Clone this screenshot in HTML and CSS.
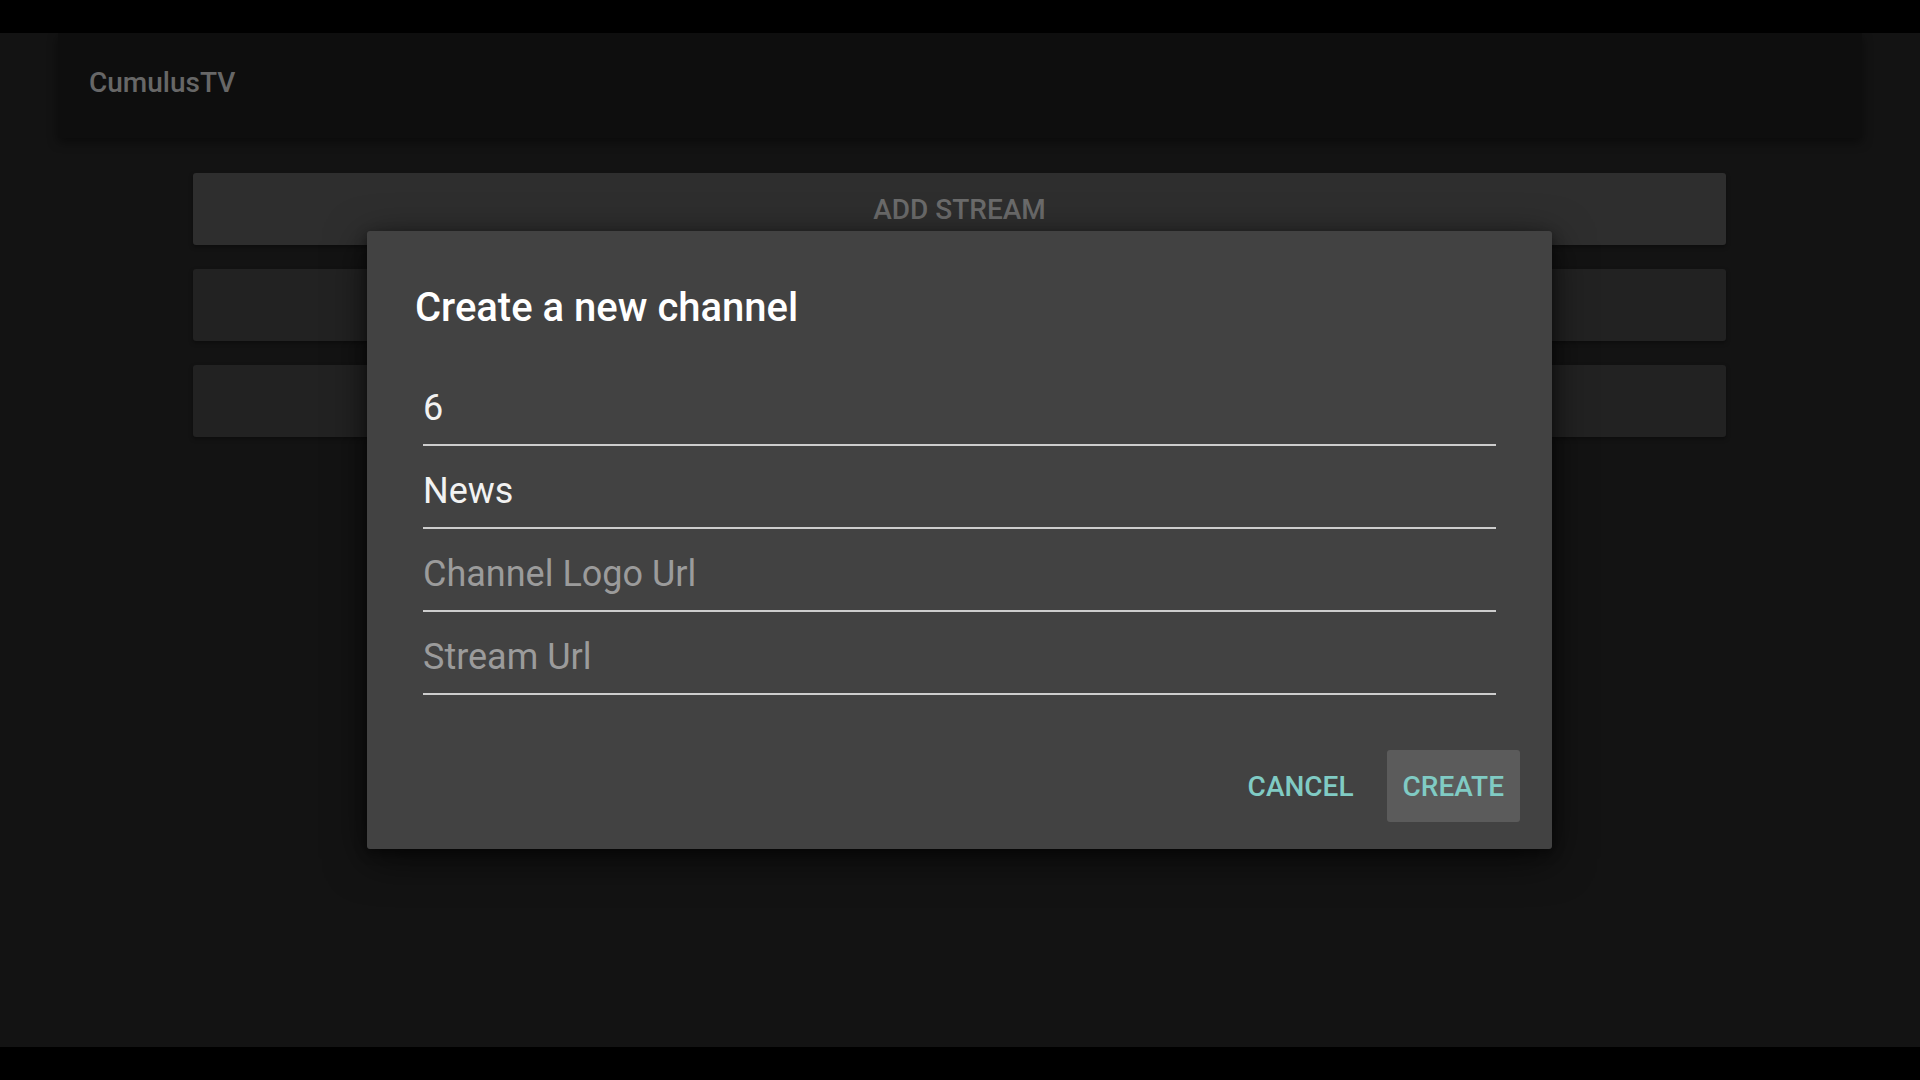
FILE: index.html
```html
<!DOCTYPE html>
<html>
<head>
<meta charset="utf-8">
<link rel="stylesheet" href="styles.css">
</head>
<body>
<div class="screen">
  <header class="toolbar">
    <span class="app-title">CumulusTV</span>
  </header>
  <div class="list">
    <div class="list-btn focused">ADD STREAM</div>
    <div class="list-btn"></div>
    <div class="list-btn"></div>
  </div>

  <div class="dialog">
    <h1 class="dialog-title">Create a new channel</h1>
    <div class="fields">
      <div class="field value">6</div>
      <div class="field value">News</div>
      <div class="field hint">Channel Logo Url</div>
      <div class="field hint">Stream Url</div>
    </div>
    <div class="actions">
      <div class="action">CANCEL</div>
      <div class="action selected">CREATE</div>
    </div>
  </div>
</div>
</body>
</html>
```
FILE: styles.css
```css
html, body {
  margin: 0;
  padding: 0;
  background: #000;
  font-family: Roboto, "Noto Sans", sans-serif;
}
.screen {
  position: relative;
  margin-top: 33px;
  height: 1014px;
  background: #131313;
  overflow: hidden;
}
.toolbar {
  margin: 0 58px 0 58px;
  height: 105px;
  box-sizing: border-box;
  padding: 29px 0 0 31px;
  background: #0e0e0e;
  box-shadow: 0 4px 10px rgba(0, 0, 0, 0.45);
}
.app-title {
  display: block;
  font-size: 28px;
  line-height: 42px;
  font-weight: 500;
  color: #676767;
}
.list {
  display: flex;
  flex-direction: column;
  gap: 24px;
  margin: 35px 194px 0 193px;
}
.list-btn {
  height: 72px;
  border-radius: 3px;
  background: #222222;
  box-shadow: 0 2px 4px rgba(0, 0, 0, 0.35);
  text-align: center;
  font-size: 28px;
  font-weight: 500;
  line-height: 74px;
  color: #6b6b6b;
}
.list-btn.focused {
  background: #2e2e2e;
}
.dialog {
  position: absolute;
  left: 367px;
  top: 198px;
  width: 1185px;
  box-sizing: border-box;
  padding: 53px 32px 27px 48px;
  background: #424242;
  border-radius: 3px;
  box-shadow: 0 10px 40px rgba(0, 0, 0, 0.6), 0 4px 12px rgba(0, 0, 0, 0.4);
}
.dialog-title {
  margin: 0;
  font-size: 40px;
  line-height: 48px;
  font-weight: 500;
  color: #ffffff;
}
.fields {
  display: flex;
  flex-direction: column;
  gap: 22px;
  margin: 53px 24px 0 8px;
}
.field {
  padding-top: 1px;
  padding-bottom: 14px;
  font-size: 36px;
  line-height: 44px;
  border-bottom: 2px solid #cdcdcd;
}
.field.value {
  color: #f2f2f2;
}
.field.hint {
  color: #9b9b9b;
}
.actions {
  display: flex;
  justify-content: flex-end;
  gap: 17px;
  margin-top: 55px;
}
.action {
  height: 72px;
  padding: 0 16px;
  border-radius: 3px;
  font-size: 28px;
  font-weight: 500;
  line-height: 74px;
  color: #80cbc4;
}
.action.selected {
  background: #5b5b5b;
}
```
